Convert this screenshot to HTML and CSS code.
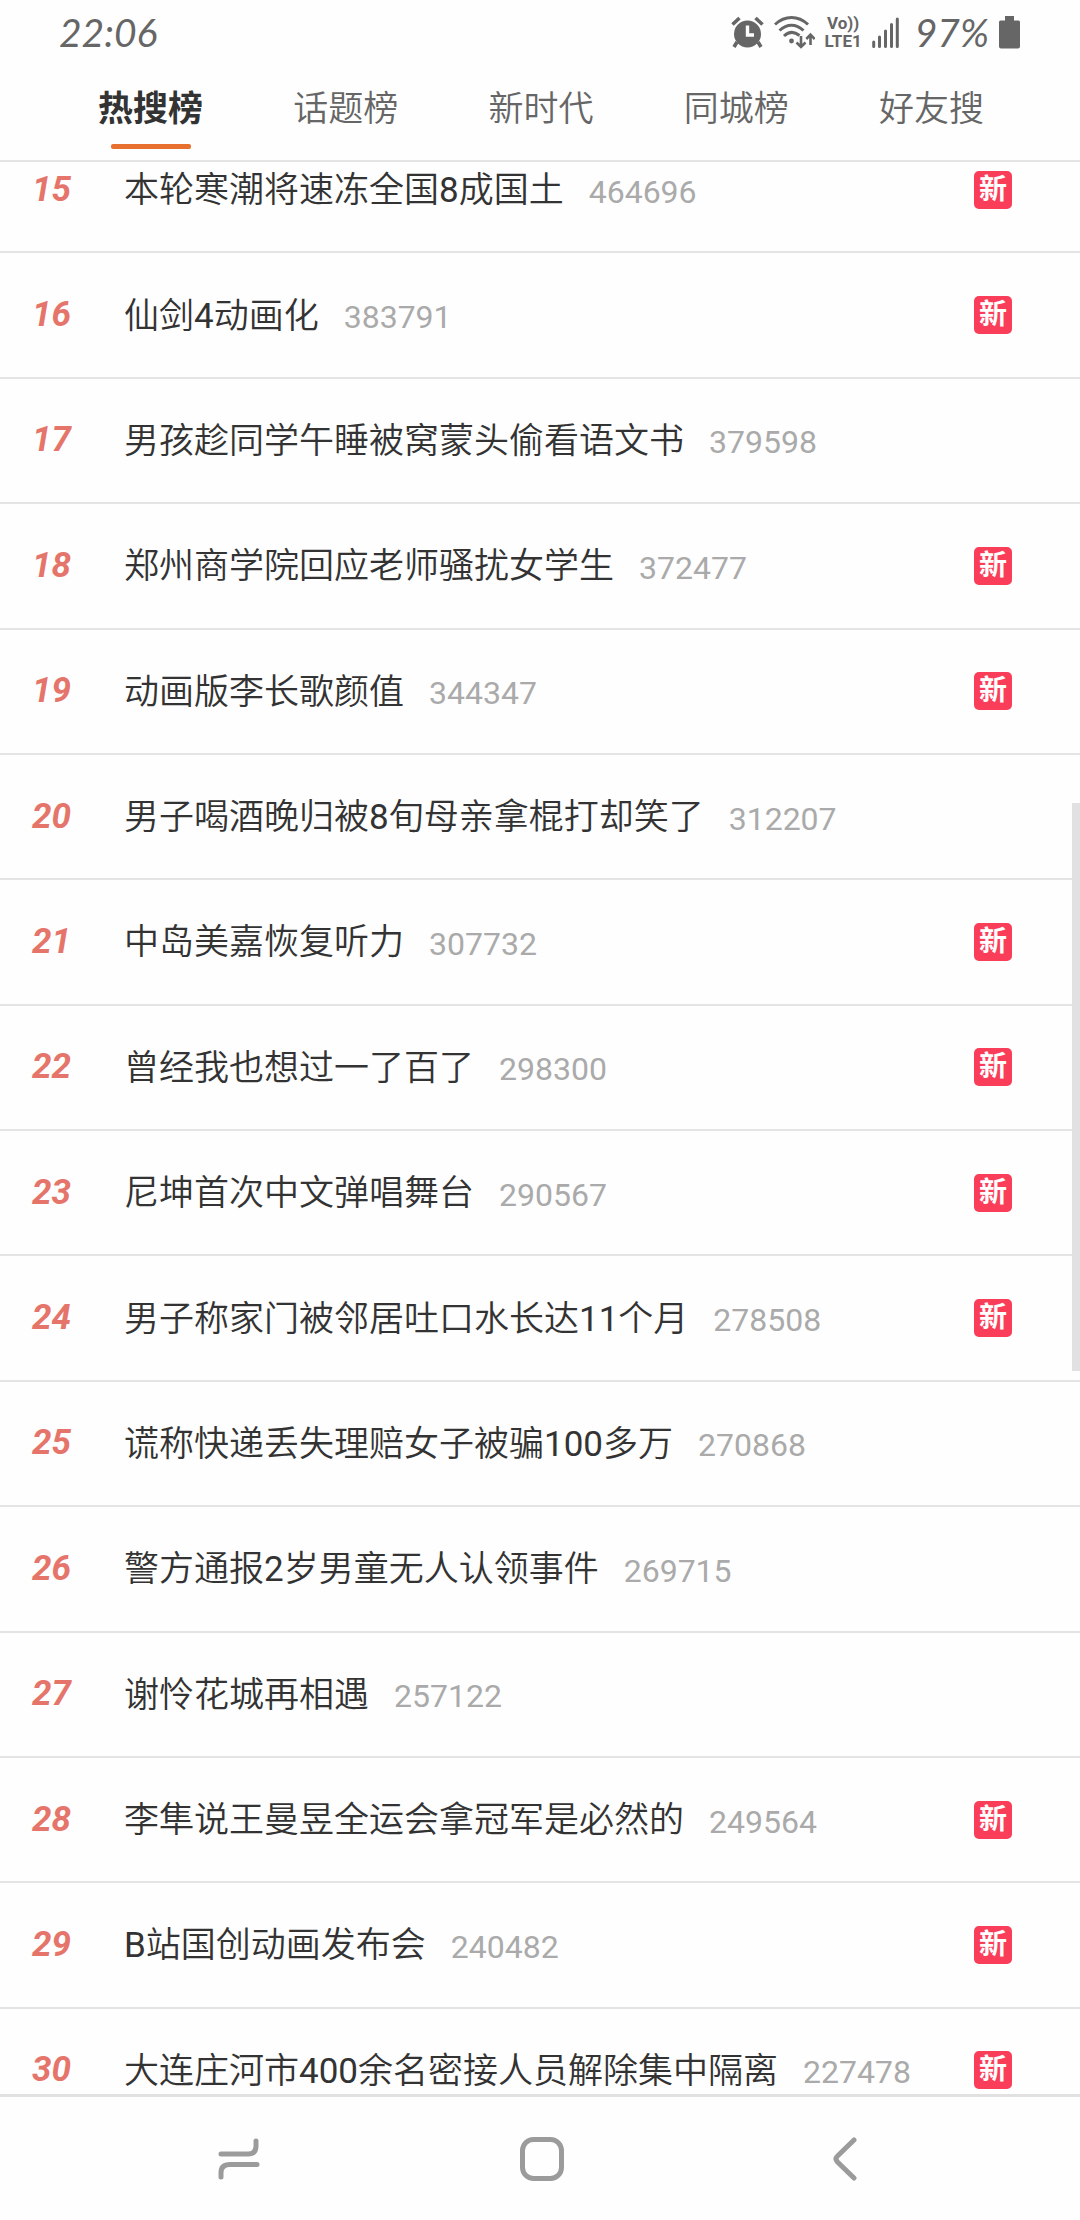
FILE: index.html
```html
<!DOCTYPE html>
<html lang="zh-CN">
<head>
    <meta charset="UTF-8">
    <meta name="viewport" content="width=device-width, initial-scale=1.0">
    <title>热搜榜</title>
    <link rel="stylesheet" href="styles.css">
</head>
<body>
    <header class="status-bar">
        <time class="clock">22:06</time>
        <div class="status-icons">
            <svg class="icon-alarm" width="33" height="33" viewBox="0 0 33 33">
                <path d="M6 26l-3 5M27 26l3 5M1.500 8.500l7-6.500M31.500 8.500l-7-6.500" stroke="#666" stroke-width="3.600" fill="none"/>
                <circle cx="16.500" cy="18" r="13.500" fill="#666"/>
                <path d="M16.500 9.500v9.500h6.500" stroke="#fefefe" stroke-width="3.400" fill="none"/>
            </svg>
            <svg class="icon-wifi" width="41" height="33" viewBox="0 0 41 33">
                <g fill="none" stroke="#666" stroke-width="3">
                    <path d="M1 8.500C11-.8 24-.8 34 8.500"/>
                    <path d="M5.500 14.500c7.500-7 16.500-7 24 0"/>
                    <path d="M10 20c5-4.600 10.500-4.600 15.500-.500"/>
                    <path d="M27 20v11M22.500 26.500l4.500 4.500 4.500-4.500" stroke-width="2.600"/>
                    <path d="M36.500 29V19M32.300 23l4.200-4.300 4.200 4.300" stroke-width="2.600"/>
                </g>
                <circle cx="17.500" cy="25" r="2.400" fill="#666"/>
            </svg>
            <div class="volte"><span>Vo))</span><span>LTE1</span></div>
            <svg class="icon-signal" width="27" height="33" viewBox="0 0 27 33">
                <path d="M1.700 26v4.500M7.500 21v9.500M13.500 15v15.500M19.500 8.500v22M25.300 3v27.500" stroke="#666" stroke-width="3" stroke-linecap="round"/>
            </svg>
            <span class="battery-level">97%</span>
            <svg class="icon-battery" width="21" height="33" viewBox="0 0 21 33">
                <path d="M6 0h9v4.500h4.500q1.500 0 1.500 1.500v24.500q0 2-2 2H2q-2 0-2-2V6q0-1.500 1.500-1.500H6z" fill="#666"/>
            </svg>
        </div>
    </header>

    <nav class="tabs">
        <button type="button" class="tab active">热搜榜</button>
        <button type="button" class="tab">话题榜</button>
        <button type="button" class="tab">新时代</button>
        <button type="button" class="tab">同城榜</button>
        <button type="button" class="tab">好友搜</button>
    </nav>

    <main class="list-view">
        <ol class="hot-list" start="15">
            <li><a class="row" href="#"><span class="rank">15</span><span class="title">本轮寒潮将速冻全国8成国土</span><span class="count">464696</span><span class="badge">新</span></a></li>
            <li><a class="row" href="#"><span class="rank">16</span><span class="title">仙剑4动画化</span><span class="count">383791</span><span class="badge">新</span></a></li>
            <li><a class="row" href="#"><span class="rank">17</span><span class="title">男孩趁同学午睡被窝蒙头偷看语文书</span><span class="count">379598</span></a></li>
            <li><a class="row" href="#"><span class="rank">18</span><span class="title">郑州商学院回应老师骚扰女学生</span><span class="count">372477</span><span class="badge">新</span></a></li>
            <li><a class="row" href="#"><span class="rank">19</span><span class="title">动画版李长歌颜值</span><span class="count">344347</span><span class="badge">新</span></a></li>
            <li><a class="row" href="#"><span class="rank">20</span><span class="title">男子喝酒晚归被8旬母亲拿棍打却笑了</span><span class="count">312207</span></a></li>
            <li><a class="row" href="#"><span class="rank">21</span><span class="title">中岛美嘉恢复听力</span><span class="count">307732</span><span class="badge">新</span></a></li>
            <li><a class="row" href="#"><span class="rank">22</span><span class="title">曾经我也想过一了百了</span><span class="count">298300</span><span class="badge">新</span></a></li>
            <li><a class="row" href="#"><span class="rank">23</span><span class="title">尼坤首次中文弹唱舞台</span><span class="count">290567</span><span class="badge">新</span></a></li>
            <li><a class="row" href="#"><span class="rank">24</span><span class="title">男子称家门被邻居吐口水长达11个月</span><span class="count">278508</span><span class="badge">新</span></a></li>
            <li><a class="row" href="#"><span class="rank">25</span><span class="title">谎称快递丢失理赔女子被骗100多万</span><span class="count">270868</span></a></li>
            <li><a class="row" href="#"><span class="rank">26</span><span class="title">警方通报2岁男童无人认领事件</span><span class="count">269715</span></a></li>
            <li><a class="row" href="#"><span class="rank">27</span><span class="title">谢怜花城再相遇</span><span class="count">257122</span></a></li>
            <li><a class="row" href="#"><span class="rank">28</span><span class="title">李隼说王曼昱全运会拿冠军是必然的</span><span class="count">249564</span><span class="badge">新</span></a></li>
            <li><a class="row" href="#"><span class="rank">29</span><span class="title">B站国创动画发布会</span><span class="count">240482</span><span class="badge">新</span></a></li>
            <li><a class="row" href="#"><span class="rank">30</span><span class="title">大连庄河市400余名密接人员解除集中隔离</span><span class="count">227478</span><span class="badge">新</span></a></li>
        </ol>
        <div class="scroll-thumb"></div>
    </main>

    <nav class="nav-bar">
        <button type="button" aria-label="最近任务">
            <svg width="44" height="44" viewBox="0 0 44 44">
                <path d="M4 17h27q8 0 8-8V4M40 27.500H13q-9 0-9 8V40"/>
            </svg>
        </button>
        <button type="button" aria-label="主屏幕">
            <svg width="44" height="44" viewBox="0 0 44 44">
                <rect x="2.500" y="2.500" width="39" height="39" rx="11"/>
            </svg>
        </button>
        <button type="button" aria-label="返回">
            <svg width="44" height="44" viewBox="0 0 44 44">
                <path d="M31 3L14.500 19q-3 3 0 6L31 41"/>
            </svg>
        </button>
    </nav>
</body>
</html>
```

FILE: styles.css
```css
* {
    box-sizing: border-box;
}

body {
    margin: 0;
    height: 100vh;
    display: flex;
    flex-direction: column;
    background: #fefefe;
    color: #333;
    font-family: Roboto, "Noto Sans CJK SC", sans-serif;
}

button {
    padding: 0;
    border: none;
    background: none;
    color: inherit;
    font-family: inherit;
    cursor: pointer;
}

/* Status bar */
.status-bar {
    flex: none;
    height: 64px;
    padding: 0 60px 0 59px;
    display: flex;
    justify-content: space-between;
    align-items: center;
    color: #666;
}

.clock, .battery-level {
    font-family: Lato, sans-serif;
    font-style: italic;
    font-size: 39px;
    line-height: 40px;
}

.status-icons {
    display: flex;
    align-items: center;
    gap: 10px;
}

.volte {
    display: flex;
    flex-direction: column;
    align-items: center;
    font-size: 17px;
    font-weight: 700;
    line-height: 18px;
}

.battery-level {
    padding-left: 6px;
}

/* Tabs */
.tabs {
    flex: none;
    height: 98px;
    padding: 0 51px 0 53px;
    display: flex;
    border-bottom: 2px solid #e4e4e4;
}

.tab {
    flex: 1;
    display: flex;
    flex-direction: column;
    align-items: center;
    padding-top: 22px;
    color: #666;
    font-family: Roboto, "Noto Sans CJK SC DemiLight", "Noto Sans CJK SC", sans-serif;
    font-size: 35px;
    font-weight: 400;
    line-height: 48px;
}

.tab.active {
    color: #333;
    font-family: Roboto, "Noto Sans CJK SC", sans-serif;
    font-weight: 700;
}

.tab.active::after {
    content: "";
    width: 80px;
    height: 5px;
    margin-top: 10px;
    border-radius: 2px;
    background: #e8702f;
}

/* Hot search list */
.list-view {
    flex: 1;
    min-height: 0;
    position: relative;
    display: flex;
    flex-direction: column;
    overflow: hidden;
}

.hot-list {
    flex: 1 0 auto;
    margin: -34px 0 -40px;
    padding: 0;
    list-style: none;
    display: grid;
    grid-auto-rows: minmax(125px, 1fr);
}

.hot-list li {
    display: grid;
    border-bottom: 2px solid #e4e4e4;
}

.row {
    display: flex;
    align-items: center;
    padding: 0 68px 0 32px;
    color: #333;
    text-decoration: none;
    line-height: 48px;
    white-space: nowrap;
}

.rank {
    width: 92px;
    color: #e5756a;
    font-size: 35px;
    font-style: italic;
    font-weight: 700;
}

.title {
    padding-top: 3px;
    font-family: Roboto, "Noto Sans CJK SC DemiLight", "Noto Sans CJK SC", sans-serif;
    font-size: 35px;
    font-weight: 400;
}

.count {
    margin-left: 25px;
    padding-top: 4px;
    color: #aaa;
    font-size: 32px;
}

.badge {
    width: 38px;
    height: 38px;
    margin-left: auto;
    border-radius: 5px;
    background: #fa3d58;
    color: #fff;
    font-size: 28px;
    font-weight: 700;
    line-height: 37px;
    text-align: center;
}

.scroll-thumb {
    position: absolute;
    top: 33.2%;
    right: 0;
    width: 8px;
    height: 29.4%;
    background: #e1e1e1;
}

/* Bottom navigation */
.nav-bar {
    flex: none;
    height: 126px;
    padding: 0 84px 0 87px;
    display: flex;
    border-top: 3px solid #e1e1e1;
}

.nav-bar button {
    flex: 1;
    display: flex;
    justify-content: center;
    align-items: center;
}

.nav-bar svg {
    fill: none;
    stroke: #9b9b9b;
    stroke-width: 5;
    stroke-linecap: round;
    stroke-linejoin: round;
}
```
